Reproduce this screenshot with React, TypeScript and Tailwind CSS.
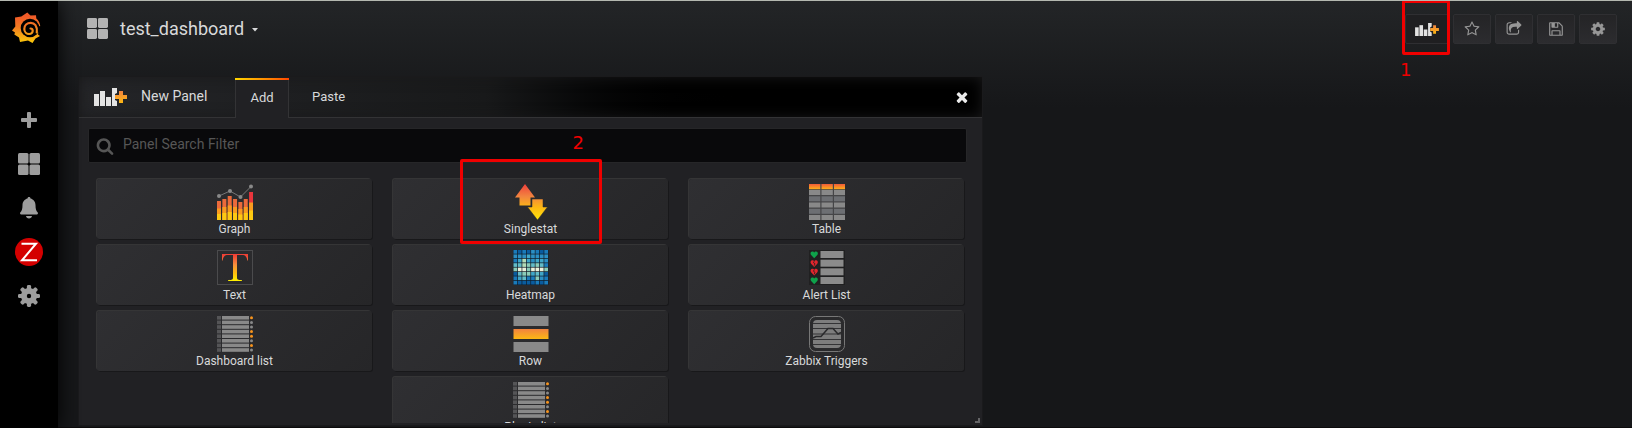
import React from "react";

const faPaths = {
  star: "M1201 1004l306-297-422-62-189-382-189 382-422 62 306 297-73 421 378-199 377 199zm527-357q0 22-26 48l-363 354 86 500q1 7 1 20 0 50-41 50-19 0-40-12l-449-236-449 236q-22 12-40 12-21 0-31.5-14.5t-10.5-35.5q0-6 2-20l86-500-364-354q-25-27-25-48 0-37 56-46l502-73 225-455q19-41 49-41t49 41l225 455 502 73q56 9 56 46z",
  save: "M512 1536h768v-384h-768v384zm896 0h128v-896q0-14-10-38.5t-20-34.5l-281-281q-10-10-34-20t-39-10v416q0 40-28 68t-68 28h-576q-40 0-68-28t-28-68v-416h-128v1280h128v-416q0-40 28-68t68-28h832q40 0 68 28t28 68v416zm-384-928v-320q0-13-9.5-22.5t-22.5-9.5h-192q-13 0-22.5 9.5t-9.5 22.5v320q0 13 9.5 22.5t22.5 9.5h192q13 0 22.5-9.5t9.5-22.5zm640 32v928q0 40-28 68t-68 28h-1344q-40 0-68-28t-28-68v-1344q0-40 28-68t68-28h928q40 0 88 20t76 48l280 280q28 28 48 76t20 88z",
  share: "M1472 989v259q0 119-84.5 203.5t-203.5 84.5h-832q-119 0-203.5-84.5t-84.5-203.5v-832q0-119 84.5-203.5t203.5-84.5h255q13 0 22.5 9.5t9.5 22.5q0 27-26 32-77 26-133 60-10 4-16 4h-112q-66 0-113 47t-47 113v832q0 66 47 113t113 47h832q66 0 113-47t47-113v-214q0-19 18-29 28-13 54-37 16-16 35-8 21 9 21 29zm237-496l-384 384q-18 19-45 19-12 0-25-5-39-17-39-59v-192h-160q-323 0-438 131-119 137-74 473 3 23-20 34-8 2-12 2-16 0-26-13-10-14-21-31t-39.5-68.5-49.5-99.5-38.5-114-17.5-122q0-49 3.5-91t14-90 28-88 47-81.5 68.5-74 94.5-61.5 124.5-48.5 159.5-30.5 196.5-11h160v-192q0-42 39-59 13-5 25-5 26 0 45 19l384 384q19 19 19 45t-19 45z",
  cog: "M1152 896q0-106-75-181t-181-75-181 75-75 181 75 181 181 75 181-75 75-181zm512-109v222q0 12-8 23t-20 13l-185 28q-19 54-39 91 35 50 107 138 10 12 10 25t-9 23q-27 37-99 108t-94 71q-12 0-26-9l-138-108q-44 23-91 38-16 136-29 186-7 28-36 28h-222q-14 0-24.5-8.5t-11.5-21.5l-28-184q-49-16-90-37l-141 107q-10 9-25 9-14 0-25-11-126-114-165-168-7-10-7-23 0-12 8-23 15-21 51-66.5t54-70.5q-27-50-41-99l-183-27q-13-2-21-12.5t-8-23.5v-222q0-12 8-23t19-13l186-28q14-46 39-92-40-57-107-138-10-12-10-24 0-10 9-23 26-36 98.5-107.5t94.5-71.5q13 0 26 10l138 107q44-23 91-38 16-136 29-186 7-28 36-28h222q14 0 24.5 8.5t11.5 21.5l28 184q49 16 90 37l142-107q9-9 24-9 13 0 25 10 129 119 165 170 7 8 7 22 0 12-8 23-15 21-51 66.5t-54 70.5q26 50 41 98l183 28q13 2 21 12.5t8 23.5z",
  search: "M1216 832q0-185-131.5-316.5t-316.5-131.5-316.5 131.5-131.5 316.5 131.5 316.5 316.5 131.5 316.5-131.5 131.5-316.5zm512 832q0 52-38 90t-90 38q-54 0-90-38l-343-342q-179 124-399 124-143 0-273.5-55.5t-225-150-150-225-55.5-273.5 55.5-273.5 150-225 225-150 273.5-55.5 273.5 55.5 225 150 150 225 55.5 273.5q0 220-124 399l343 343q37 37 37 90z",
  times: "M1490 1322q0 40-28 68l-136 136q-28 28-68 28t-68-28l-294-294-294 294q-28 28-68 28t-68-28l-136-136q-28-28-28-68t28-68l294-294-294-294q-28-28-28-68t28-68l136-136q28-28 68-28t68 28l294 294 294-294q28-28 68-28t68 28l136 136q28 28 28 68t-28 68l-294 294 294 294q28 28 28 68z",
};

function Fa({ name, className }: { name: keyof typeof faPaths; className: string }) {
  return (
    <svg viewBox="0 0 1792 1792" fill="currentColor" className={className} aria-hidden="true">
      <path d={faPaths[name]} />
    </svg>
  );
}

function Gradients() {
  return (
    <svg className="absolute size-0" aria-hidden="true">
      <defs>
        <linearGradient id="logo" gradientUnits="userSpaceOnUse" x1="0" y1="4" x2="0" y2="31">
          <stop offset="0" stopColor="#f05a28" />
          <stop offset="0.4" stopColor="#f37a22" />
          <stop offset="1" stopColor="#fbca0a" />
        </linearGradient>
        <linearGradient id="plus" x1="0" y1="0" x2="0" y2="1">
          <stop offset="0" stopColor="#f2833f" />
          <stop offset="1" stopColor="#fcb813" />
        </linearGradient>
        <linearGradient id="head" x1="0" y1="0" x2="0" y2="1">
          <stop offset="0" stopColor="#f05a3a" />
          <stop offset="1" stopColor="#fdb018" />
        </linearGradient>
        <linearGradient id="letter" x1="0" y1="0" x2="0" y2="1">
          <stop offset="0.05" stopColor="#ef4136" />
          <stop offset="0.4" stopColor="#f6903d" />
          <stop offset="0.7" stopColor="#fdbc10" />
          <stop offset="1" stopColor="#fff200" />
        </linearGradient>
        <linearGradient id="arrows" gradientUnits="userSpaceOnUse" x1="0" y1="0" x2="0" y2="36">
          <stop offset="0" stopColor="#ef3f3c" />
          <stop offset="0.35" stopColor="#f2853f" />
          <stop offset="0.65" stopColor="#fdb813" />
          <stop offset="1" stopColor="#ffe60a" />
        </linearGradient>
      </defs>
    </svg>
  );
}

function Logo() {
  return (
    <svg viewBox="0 0 29 32" className="h-8 w-[29px]" aria-hidden="true">
      <path
        d="M15.300.5 18.500 3.600 24 3.300 24.300 6.500C26.500 8.300 28.200 11.500 28.300 14.500L27 17 26 22.500 28 24 23.500 26.500 20.500 31 16 28.500 8 30 7 25.500 2.300 22.500 3 20.500 0 18.500 3.300 14.500 3 5.500 9.300 4.500z"
        fill="url(#logo)"
      />
      <circle cx="18" cy="16" r="9.300" fill="#000" />
      <path d="M25 14.500l4-.5-1 7-3.500-1z" fill="#000" />
      <path
        d="M24.800 20.500C25.500 14 22.500 10.800 18.800 10.800 15 10.800 12.300 13.500 12.300 17c0 3.200 2.500 5 4.800 5 2.400 0 3.700-1.700 3.600-3.400-.1-1.300-1-2.100-2.200-2.100"
        fill="none"
        stroke="url(#logo)"
        strokeWidth="2.200"
        strokeLinecap="round"
      />
    </svg>
  );
}

function GridIcon({ className }: { className: string }) {
  return (
    <svg viewBox="0 0 22 22" fill="currentColor" className={className} aria-hidden="true">
      <rect x="0" y="0" width="10.500" height="10.500" rx="1.500" />
      <rect x="11.500" y="0" width="10.500" height="10.500" rx="1.500" />
      <rect x="0" y="11.500" width="10.500" height="10.500" rx="1.500" />
      <rect x="11.500" y="11.500" width="10.500" height="10.500" rx="1.500" />
    </svg>
  );
}

function AddPanelIcon({ className }: { className: string }) {
  return (
    <svg viewBox="0 0 33 18" className={className} aria-hidden="true">
      <g fill="#e3e3e3">
        <rect x="0" y="6" width="5" height="12" />
        <rect x="6" y="3" width="5" height="15" />
        <rect x="12" y="9" width="5" height="9" />
        <path d="M18 0h5v5l-2 1v6l2 1v5h-5z" />
      </g>
      <path d="M25 3h4v4h4v4h-4v4h-4v-4h-4V7h4z" fill="url(#plus)" />
    </svg>
  );
}

function GraphIcon() {
  const bars = [
    [17, 24.5, 30],
    [15, 23, 29],
    [12, 21.5, 28],
    [15, 23, 29],
    [18, 25, 30.5],
    [15, 23, 29],
    [8, 18.5, 26.5],
  ];
  return (
    <svg viewBox="0 0 36 36" className="size-9" aria-hidden="true">
      {bars.map(([top, mid, low], i) => (
        <g key={i}>
          <rect x={i * 5.35} y={top} width="4" height={36 - top} fill={i === 6 ? "#e9353c" : "#ec6a3b"} />
          <rect x={i * 5.35} y={mid} width="4" height={36 - mid} fill="#f99b1f" />
          <rect x={i * 5.35} y={low} width="4" height={36 - low} fill="#fdc912" />
        </g>
      ))}
      <path d="M2 12 13 7l10.500 6L34 2.500" fill="none" stroke="#777" strokeWidth="1" />
      <g fill="#898989">
        <circle cx="2" cy="12" r="2" />
        <circle cx="13" cy="7" r="2" />
        <circle cx="23.500" cy="13" r="2" />
        <circle cx="34" cy="2.500" r="2" />
      </g>
    </svg>
  );
}

function SinglestatIcon() {
  return (
    <svg viewBox="0 0 36 36" className="size-9" aria-hidden="true">
      <path d="M12 0 22 13.500H17.500V21.500H6.500V13.500H2z" fill="url(#arrows)" />
      <path d="M19 15h11v8h4.500L24.500 36 14.500 23H19z" fill="url(#arrows)" stroke="#2a2a2c" strokeWidth="0.500" />
    </svg>
  );
}

function TableIcon() {
  return (
    <svg viewBox="0 0 36 36" className="size-9" aria-hidden="true">
      <rect width="36" height="36" fill="#454547" />
      {[0, 12.5, 25].map((x) => (
        <g key={x}>
          <rect x={x} y="0" width="11.300" height="5.200" fill="url(#head)" />
          {[6, 12.3, 18.5, 24.8, 31].map((y, i) => (
            <rect key={y} x={x} y={y} width="11.300" height="5" fill={i % 2 ? "#6d6f73" : "#898989"} />
          ))}
        </g>
      ))}
    </svg>
  );
}

function TextIcon() {
  return (
    <svg viewBox="0 0 36 36" className="size-9" aria-hidden="true">
      <rect x="0.500" y="0.500" width="35" height="34" fill="none" stroke="#4b4b4d" />
      <path
        d="M5 4h26v6.500h-.7C29.900 7 28.500 5 25 5h-5v22.500c0 2 .8 2.500 5 2.700V31H11v-.8c4.200-.2 5-.7 5-2.700V5h-5C7.500 5 6.100 7 5.700 10.500H5z"
        fill="url(#letter)"
      />
    </svg>
  );
}

const heat = ["21213212", "33343333", "24743443", "55765652", "68868886", "15664541", "24522632", "21111212"];
const heatColors: Record<string, string> = {
  "1": "#0a5c9f",
  "2": "#1a7bbb",
  "3": "#2b8fc4",
  "4": "#3fa6c8",
  "5": "#62bcc8",
  "6": "#8accb9",
  "7": "#b3dcb8",
  "8": "#ebf0da",
};

function HeatmapIcon() {
  return (
    <svg viewBox="0 0 36 36" className="size-9" aria-hidden="true">
      <rect x="0.500" width="35" height="35" fill="#101c28" />
      {heat.map((row, y) =>
        row.split("").map((c, x) => (
          <rect key={`${x}-${y}`} x={0.5 + x * 4.4} y={y * 4.4} width="3.700" height="3.700" fill={heatColors[c]} />
        )),
      )}
    </svg>
  );
}

function AlertListIcon() {
  return (
    <svg viewBox="0 0 36 36" className="size-9" aria-hidden="true">
      <rect width="36" height="35" fill="#202021" />
      {[1, 9.7, 18.3, 27].map((y, i) => {
        const ok = i === 0 || i === 3;
        return (
          <g key={y}>
            <rect x="11.500" y={y} width="23" height="7" fill="#8b8b8b" />
            <path
              transform={`translate(1.5 ${y})`}
              d="M3.700 7.300 .6 4C-.6 2.600.2.500 1.900.5c.9 0 1.500.5 1.800 1 .3-.5.9-1 1.800-1 1.700 0 2.500 2.100 1.300 3.500z"
              fill={ok ? "#0ea24b" : "#e2262d"}
            />
            {!ok && (
              <path transform={`translate(1.5 ${y})`} d="M3.700 1.500 3 3l1.500 1-.8 2" stroke="#202021" strokeWidth="0.800" fill="none" />
            )}
          </g>
        );
      })}
    </svg>
  );
}

function ListIcon() {
  return (
    <svg viewBox="0 0 36 36" className="size-9" aria-hidden="true">
      {[0, 1, 2, 3, 4, 5, 6, 7].map((i) => (
        <g key={i}>
          <rect x="0" y={i * 4.6} width="4" height="3.600" fill="#555557" />
          <rect x="5" y={i * 4.6} width="27" height="3.600" fill="#898989" />
          <circle cx="34.500" cy={i * 4.6 + 1.8} r="1.500" fill={[0, 3, 4, 6].includes(i) ? "#f7941e" : "#898989"} />
        </g>
      ))}
    </svg>
  );
}

function RowIcon() {
  return (
    <svg viewBox="0 0 36 36" className="size-9" aria-hidden="true">
      <rect x="0.500" y="0" width="35" height="10" fill="#898989" />
      <rect x="0.500" y="13" width="35" height="10" fill="url(#plus)" />
      <rect x="0.500" y="26" width="35" height="10" fill="#898989" />
    </svg>
  );
}

function TriggersIcon() {
  return (
    <svg viewBox="0 0 36 36" className="size-9" aria-hidden="true">
      <rect x="0.500" y="0.500" width="35" height="35" rx="6" fill="#2a2a2c" stroke="#777" />
      <rect x="4" y="4" width="28" height="28" rx="4" fill="#7d7d7d" />
      <path d="M4 7.500h28M4 12.500h28M4 18h28M4 23.500h28M4 28.500h28" stroke="#333335" strokeWidth="1" />
      <path d="M4 22l3-1.500h5l7-8h5l5 5.500 3-1.500" fill="none" stroke="#29292b" strokeWidth="1.500" />
    </svg>
  );
}

const panels = [
  { name: "Graph", Icon: GraphIcon },
  { name: "Singlestat", Icon: SinglestatIcon },
  { name: "Table", Icon: TableIcon },
  { name: "Text", Icon: TextIcon },
  { name: "Heatmap", Icon: HeatmapIcon },
  { name: "Alert List", Icon: AlertListIcon },
  { name: "Dashboard list", Icon: ListIcon },
  { name: "Row", Icon: RowIcon },
  { name: "Zabbix Triggers", Icon: TriggersIcon },
  { name: "Plugin list", Icon: ListIcon },
];

function Sidebar() {
  const link = "flex h-11 w-full items-center justify-center text-[#9d9d9d]";
  return (
    <nav aria-label="Main" className="z-10 flex w-[58px] shrink-0 flex-col bg-black shadow-[0_0_20px_#000]">
      <a href="#home" aria-label="Home" className="mt-[11px] mb-[54px] ml-3 flex h-8 items-center">
        <Logo />
      </a>
      <a href="#create" aria-label="Create" className={link}>
        <svg viewBox="0 0 16 16" className="size-4" fill="currentColor" aria-hidden="true">
          <path d="M7 0h2a1 1 0 0 1 1 1v5h5a1 1 0 0 1 1 1v2a1 1 0 0 1-1 1h-5v5a1 1 0 0 1-1 1H7a1 1 0 0 1-1-1v-5H1a1 1 0 0 1-1-1V7a1 1 0 0 1 1-1h5V1a1 1 0 0 1 1-1z" />
        </svg>
      </a>
      <a href="#dashboards" aria-label="Dashboards" className={link}>
        <GridIcon className="size-[22px]" />
      </a>
      <a href="#alerting" aria-label="Alerting" className={link}>
        <svg viewBox="0 0 18 22" className="h-[22px] w-[18px]" fill="currentColor" aria-hidden="true">
          <path d="M9 0c1 0 1.500.7 1.500 1.500C13.500 2.200 15.500 5 15.500 8c0 4 .8 6 2.100 7.300.6.700.4 2.200-.6 2.200H1c-1 0-1.200-1.500-.6-2.200C1.700 14 2.500 12 2.500 8c0-3 2-5.800 5-6.500C7.500.7 8 0 9 0zM6 19h6c-.2 1.500-1.400 2.500-3 2.500S6.200 20.500 6 19z" />
        </svg>
      </a>
      <a href="#zabbix" aria-label="Zabbix" className={link}>
        <svg viewBox="0 0 28 28" className="size-7" aria-hidden="true">
          <circle cx="14" cy="14" r="14" fill="#d40000" />
          <path d="M6.500 5.700h14.500L7 22.300h15" fill="none" stroke="#fff" strokeWidth="2" />
        </svg>
      </a>
      <a href="#configuration" aria-label="Configuration" className={link}>
        <svg viewBox="0 0 22 22" className="size-[22px]" aria-hidden="true">
          <g fill="currentColor">
            {[0, 45, 90, 135].map((a) => (
              <rect key={a} x="8.900" y="0" width="4.200" height="22" rx="1.400" transform={`rotate(${a} 11 11)`} />
            ))}
            <circle cx="11" cy="11" r="8" />
          </g>
          <circle cx="11" cy="11" r="2.200" fill="#000" />
        </svg>
      </a>
    </nav>
  );
}

function Topbar() {
  const btn =
    "flex h-[30px] w-[38px] items-center justify-center rounded-xs border border-[#2f2f32] bg-linear-to-b from-[#242426] to-[#2c2c2f] text-[#969696]";
  return (
    <header className="flex items-start justify-between pr-[15px]">
      <button type="button" className="mt-[11px] ml-[29px] flex h-8 items-center text-[18px] text-[#d8d9da]">
        <GridIcon className="mr-3 size-[21px] text-[#b3b3b3]" />
        test_dashboard
        <svg viewBox="0 0 6 4" className="mt-1 ml-2 h-1 w-1.5" fill="currentColor" aria-hidden="true">
          <path d="M0 0h6L3 3.500z" />
        </svg>
      </button>
      <div className="mt-[13px] flex gap-1">
        <div className="relative">
          <button
            type="button"
            aria-label="Add panel"
            className="flex h-[30px] w-11 items-center justify-center rounded-xs border border-[#2f2f32] bg-[#1f1f21]"
          >
            <AddPanelIcon className="h-[13px] w-6" />
          </button>
          <div className="pointer-events-none absolute -top-[14px] -left-[3px] h-[55px] w-12 rounded-xs border-3 border-[#f00000]" />
          <span className="absolute top-[44px] -left-[5px] font-['DejaVu_Sans',sans-serif] text-[18px] leading-6 text-[#f00000]">1</span>
        </div>
        <button type="button" aria-label="Star" className={btn}>
          <Fa name="star" className="size-4" />
        </button>
        <button type="button" aria-label="Share" className={btn}>
          <Fa name="share" className="size-4" />
        </button>
        <button type="button" aria-label="Save" className={btn}>
          <Fa name="save" className="size-4" />
        </button>
        <button type="button" aria-label="Settings" className={btn}>
          <Fa name="cog" className="size-4" />
        </button>
      </div>
    </header>
  );
}

function PanelCard({ name, Icon }: { name: string; Icon: () => React.JSX.Element }) {
  return (
    <button
      type="button"
      className="flex h-[60px] flex-col items-center rounded-[3px] bg-linear-135 from-[#2f2f32] to-[#262628] pt-[5px] text-[12px] leading-[18px] text-[#d8d9da] shadow-[-1px_-1px_0_#353536,1px_1px_0_#18181a] last:col-start-2"
    >
      <Icon />
      {name}
    </button>
  );
}

function NewPanel() {
  return (
    <section className="relative mt-[33px] ml-[21px] flex h-[348px] max-w-[903px] flex-col bg-[#212124] shadow-[0_0_0_1px_#1a1a1c]">
      <div className="flex h-[41px] shrink-0 bg-linear-to-r from-[#242528] via-[#18191a] via-45% to-black to-75% shadow-[inset_0_0_14px_#1a1a1b]">
        <div className="flex w-[156px] items-center border-b border-[#333335] pl-[15px]">
          <AddPanelIcon className="h-[18px] w-[33px]" />
          <h2 className="ml-[14px] pb-0.5 text-[14px] text-[#d8d9da]">New Panel</h2>
        </div>
        <div role="tablist" className="flex flex-1 text-[13px] text-[#d8d9da]">
          <button type="button" role="tab" aria-selected="true" className="mt-px flex w-[54px] flex-col border-x border-[#333335] bg-[#212124]">
            <span className="-mx-px h-0.5 self-stretch bg-linear-to-r from-[#ffd500] to-[#ff4400]" />
            <span className="flex flex-1 items-center self-center pb-0.5">Add</span>
          </button>
          <button type="button" role="tab" aria-selected="false" className="flex-1 border-b border-[#333335] pl-[23px] text-left">
            Paste
          </button>
        </div>
        <div className="flex items-center border-b border-[#333335] pr-3">
          <button type="button" aria-label="Close" className="text-[#ebebeb]">
            <Fa name="times" className="size-4" />
          </button>
        </div>
      </div>
      <label className="mt-[10px] mr-[15px] ml-[9px] flex h-[35px] shrink-0 items-center rounded-xs border border-[#262628] bg-[#09090b] pl-[7px]">
        <Fa name="search" className="size-[18px] text-[#565656]" />
        <input
          type="text"
          aria-label="Panel Search Filter"
          placeholder="Panel Search Filter"
          className="ml-[9px] min-w-0 flex-1 bg-transparent pb-0.5 text-[14px] outline-none placeholder:text-[#565656]"
        />
      </label>
      <div className="relative mb-0.5 min-h-0 flex-1">
        <div className="grid h-full auto-rows-max grid-cols-3 gap-x-[21px] gap-y-1.5 overflow-hidden pt-4 pr-[18px] pl-[18px]">
          {panels.map((panel) => (
            <PanelCard key={panel.name} {...panel} />
          ))}
        </div>
        <div className="pointer-events-none absolute -top-1 left-1/2 h-[85px] w-[142px] -translate-x-1/2 rounded-xs border-3 border-[#f00000]">
          <span className="absolute -top-[31px] left-[110px] font-['DejaVu_Sans',sans-serif] text-[18px] leading-6 text-[#f00000]">2</span>
        </div>
      </div>
      <div className="absolute right-0.5 bottom-0.5 size-[5px] border-r-2 border-b-2 border-[#656567]" />
    </section>
  );
}

export default function App() {
  return (
    <div className="flex min-h-screen overflow-hidden border-t border-[#b4b8b0] bg-[#161719] font-[Roboto,sans-serif]">
      <Gradients />
      <Sidebar />
      <main className="min-w-0 flex-1 border-b border-[#0c0b0c] bg-linear-to-b from-[#232527] to-[#161719] to-25%">
        <Topbar />
        <NewPanel />
      </main>
    </div>
  );
}
